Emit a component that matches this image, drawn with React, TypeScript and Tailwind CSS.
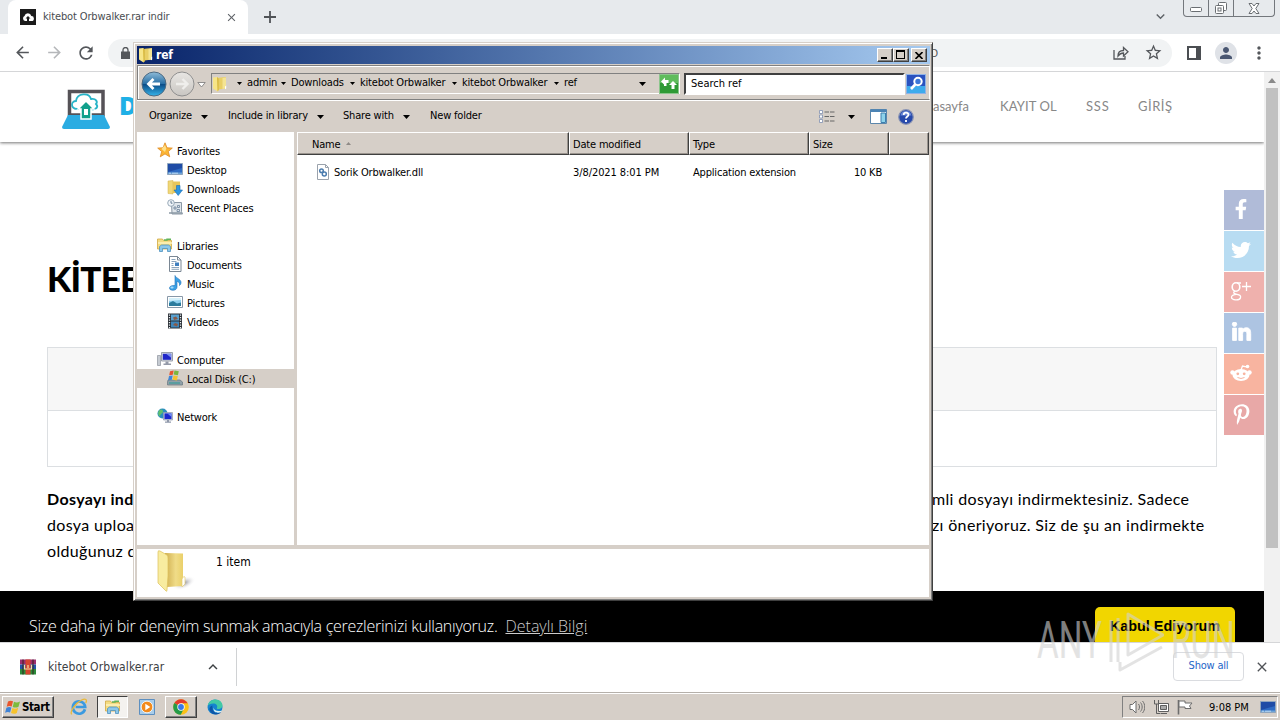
import type { ReactNode } from "react";
import {
  FaFacebookF,
  FaLinkedinIn,
  FaPinterestP,
  FaTwitter,
} from "react-icons/fa";
import {
  MdArrowBack,
  MdArrowForward,
  MdClose,
  MdExpandLess,
  MdExpandMore,
  MdMoreVert,
  MdOutlineStarBorder,
  MdPerson,
  MdRefresh,
} from "react-icons/md";

const Icon = ({ size = 16, children }: { size?: number; children: ReactNode }) => (
  <svg width={size} height={size} viewBox="0 0 16 16" fill="none" className="shrink-0">
    {children}
  </svg>
);

const FolderIcon = () => (
  <Icon>
    <path d="M6.500 1.800 14 1v11.500l-7.500 1z" fill="#e9cf66" />
    <path d="M10.500 2 14 1.500v11l-3.500.5z" fill="#f4e493" />
    <path d="M1 1.500 5 1l1.800 1.500V14L5.500 15.500 1 12.500z" fill="#f7e588" />
    <path d="M5 1l1.800 1.500V14L5.500 15.500z" fill="#d9b93f" />
    <path d="M13 10.500l1.200-1v3l-1.200.8z" fill="#fff" />
  </Icon>
);

const LargeFolderIcon = () => (
  <svg width="40" height="43" viewBox="0 0 40 43" fill="none" className="mt-px shrink-0">
    <defs>
      <linearGradient id="folderBody" x1="0" y1="0" x2="1" y2="0">
        <stop offset="0" stopColor="#cfae4e" />
        <stop offset=".6" stopColor="#f0dc88" />
        <stop offset="1" stopColor="#ead06a" />
      </linearGradient>
      <radialGradient id="folderShade">
        <stop offset="0" stopColor="#8a8a94" />
        <stop offset="1" stopColor="#fff" stopOpacity="0" />
      </radialGradient>
    </defs>
    <ellipse cx="27" cy="33" rx="12" ry="6" fill="url(#folderShade)" transform="rotate(-22 27 33)" />
    <path d="M8 3l18 .5V36l-16 1z" fill="url(#folderBody)" />
    <path d="M1 2q0-2 2-1l7 4q1 1 1 3v18l-1 14q0 2-1 1l-8-8z" fill="#f8eca0" stroke="#dcc05a" strokeWidth=".7" />
    <path d="M25 29q2-4 3-2v7l-3 3z" fill="#fff" stroke="#e4cd72" strokeWidth=".7" />
  </svg>
);

const StarIcon = () => (
  <Icon>
    <path
      d="M8 .8l2 5 5.300.3-4 3.400 1.400 5.300L8 11.900l-4.700 2.900 1.400-5.300-4-3.400L6 5.800z"
      fill="#fbb534"
      stroke="#e08a24"
      strokeWidth=".8"
    />
    <path d="M8 3l1.300 3.500L8 10 4.500 7z" fill="#ffe08a" />
  </Icon>
);

const DesktopIcon = () => (
  <Icon>
    <path d="M.5 2.500h15v11H.5z" fill="#2f6cc4" stroke="#8fa5bd" />
    <path d="M1 3h14v4L1 11z" fill="#1f4ca6" />
    <path d="M1 11.500h14V13H1z" fill="#6ea4d8" />
    <path d="M2 12.200h2M5 12.200h6" stroke="#dff0ff" strokeWidth=".7" />
  </Icon>
);

const DownloadsIcon = () => (
  <Icon>
    <path d="M1 1l5-.5V14l-5-.500z" fill="#f0d777" stroke="#d2ae4a" strokeWidth=".5" />
    <path d="M6 1.500h7V13H6z" fill="#e8c65a" />
    <path d="M9.500 5.500h3.500V10h2.500L11.200 15.500 7 10h2.500z" fill="#2f96e0" stroke="#1a6bb4" strokeWidth=".6" />
  </Icon>
);

const RecentIcon = () => (
  <Icon>
    <path d="M4.500 3.500h10v9l1 2.500H5z" fill="#dfe5ea" stroke="#8b98a5" />
    <circle cx="4" cy="4" r="3.300" fill="#f2f6fa" stroke="#8fa0b0" strokeWidth=".9" />
    <path d="M4 2v2.200h1.500" stroke="#47627c" strokeWidth=".8" />
    <path d="M7 8h2v2H7zM10.500 6.500h2v2h-2zM10 10.500h2.500v2H10z" stroke="#6b8299" strokeWidth=".8" />
    <path d="M2 14h13" stroke="#8b98a5" strokeWidth="1.500" />
  </Icon>
);

const LibrariesIcon = () => (
  <Icon>
    <path d="M.5 2h5l1 1.500h8V12H.5z" fill="#f4dc83" stroke="#d0a844" strokeWidth=".8" />
    <path d="M7 3h3v-.800h4" stroke="#62b45a" strokeWidth="1.400" />
    <path d="M1 6h14" stroke="#fff3bd" strokeWidth="1.500" />
    <path d="M2.500 14.500v-5l2-1.500h7l2 1.500v5h-3v-3h-5v3z" fill="#8cc7ea" stroke="#4f93bf" strokeWidth=".8" />
  </Icon>
);

const DocumentsIcon = () => (
  <Icon>
    <path d="M2.500.5h8l3.500 3.500v11.500H2.500z" fill="#fff" stroke="#7a8794" />
    <path d="M10.500.5V4H14" stroke="#7a8794" />
    <path d="M4.500 3.500h4M4.500 5.500h5M4.500 11.500h7.500M4.500 13.300h7.500M4.500 7.500h2M4.500 9.500h2" stroke="#6f8eac" strokeWidth=".8" />
    <path d="M8 6.500h4v3.500H8z" fill="#3f7fbf" />
  </Icon>
);

const MusicIcon = () => (
  <Icon>
    <path d="M8 .5c.6 2.500 6 3.500 6 7 0 1.500-.8 2.500-1.500 3 .6-2.500-1-3.800-2.500-4.300V12c0 2-1.700 3.300-4 3.300-2.500 0-3.500-1-3.500-2.300 0-1.700 2.500-3 5.500-2.500z" fill="#3ba1e6" stroke="#1f70b8" strokeWidth=".6" />
    <ellipse cx="5" cy="12.500" rx="1.600" ry="1" fill="#a8dcfb" />
  </Icon>
);

const PicturesIcon = () => (
  <Icon>
    <path d="M.5 2.500h15v11H.5z" fill="#fff" stroke="#8898a8" />
    <path d="M2 4h12v8H2z" fill="#8fd0ee" />
    <path d="M2 9l4-2 4 2.500 4-1V12H2z" fill="#2d7c9d" />
    <path d="M2 4h12v2L2 7z" fill="#d5f0fa" />
  </Icon>
);

const VideosIcon = () => (
  <Icon>
    <path d="M1 .5h14v15H1z" fill="#2b3036" />
    <path d="M4 1.500h8v6H4z" fill="#5aa2d0" />
    <path d="M4 8.500h8v6H4z" fill="#3f87bb" />
    <path d="M6 4.500l3-1 2 2.500-4 1zM6 12l2-2 3 1-1 2.500z" fill="#8a5a46" />
    <path d="M2.500 1.500v14M13.500 1.500v14" stroke="#e8eef2" strokeWidth="1.300" strokeDasharray="1.300 1.200" />
  </Icon>
);

const ComputerIcon = () => (
  <Icon>
    <path d="M.5 4.500h3v10h-3z" fill="#c6cbd2" stroke="#8d949e" strokeWidth=".7" />
    <path d="M4.500 1.500h11v8.500h-11z" fill="#d3d8e0" stroke="#9aa0ac" />
    <path d="M5.800 2.800h8.400v6H5.800z" fill="#2027c9" />
    <path d="M9 2.800h5.200v4z" fill="#7c90f0" />
    <path d="M8.500 10.500h3v2h2.500V14H6.500v-1.500h2z" fill="#9399a8" />
  </Icon>
);

const DiskIcon = () => (
  <Icon>
    <path d="M1 10h12l2.500 2v3H.5v-3z" fill="#8fa0a8" stroke="#66777f" strokeWidth=".7" />
    <path d="M2 13h11" stroke="#3a9b9a" strokeWidth="1.200" />
    <path d="M3 1.200l3.700-.8-.9 4.300-3.600.6z" fill="#e8552d" />
    <path d="M7.500.5l4.300.7-.9 4.100-4.300-.7z" fill="#7cb63c" />
    <path d="M2 6l3.700-.5-.9 4.300-3.700.5z" fill="#3f86d8" />
    <path d="M6.500 5.500l4.300.6-.9 4.300-4.300-.7z" fill="#f6c22e" />
  </Icon>
);

const NetworkIcon = () => (
  <Icon>
    <circle cx="5.500" cy="5.500" r="5" fill="#2b8fbe" />
    <path d="M2 2.500c2-2 4-1 4 1s-3 2-3 5C1 7.500.5 4.500 2 2.500z" fill="#5fc06e" />
    <path d="M6.500 4.500h9v7.500h-9z" fill="#c8d0de" stroke="#8f98aa" strokeWidth=".7" />
    <path d="M7.500 5.400h7v5.700h-7z" fill="#1b27cf" />
    <path d="M10.500 5.400h4V9z" fill="#6f8df2" />
    <path d="M10 12h2v1.500h2v1.300H8v-1.300h2z" fill="#8f98aa" />
  </Icon>
);

const DllIcon = () => (
  <Icon>
    <path d="M1.500.5h8l3 3v12h-11z" fill="#fff" stroke="#9aa2ac" />
    <path d="M9.500.5v3h3" stroke="#9aa2ac" />
    <circle cx="5.500" cy="6.800" r="1.800" stroke="#4b7cae" strokeWidth="1.500" />
    <circle cx="8.300" cy="10" r="2" stroke="#4b7cae" strokeWidth="1.500" />
  </Icon>
);

const SiteLogo = () => (
  <svg width="48" height="42" viewBox="0 0 48 42" fill="none" className="mt-1">
    <path d="M7.500 3.500h33.500v23.500H7.500z" fill="#fff" stroke="#555257" strokeWidth="3.500" />
    <path d="M6 27h36l6 12q0 2-2 2H2q-2 0-2-2z" fill="#2bace2" />
    <path d="M17 21h-2c-7-1-6-8-1-8 1-8 13-9 15-2 5-1 7 3 5 5 3 3 0 6-5 5" fill="#fff" stroke="#28b4c8" strokeWidth="1.800" />
    <path d="M24 13l8 8h-3v10H19V21h-3z" fill="#11a08c" stroke="#fff" strokeWidth="1.500" />
    <path d="M22 21h4v6h-4z" fill="#fff" />
  </svg>
);

const WindowsFlag = () => (
  <Icon>
    <path d="M3 2.500c2-1.200 3.500-1 5-.2L6.700 7.500c-1.700-.8-3-.8-5 .2z" fill="#e9562d" />
    <path d="M9 2.700c2 1 3.500 1 6-.2l-1.500 5.200c-2 1.200-4 1-5.800.2z" fill="#7dbb3d" />
    <path d="M1.400 8.800c2-1 3.500-.9 5-.2l-1.300 5c-1.600-.8-3.100-.8-5 .2z" fill="#3f83d6" />
    <path d="M7.400 9c2 1 3.700.9 5.800-.2l-1.400 5.100c-2 1.200-4 1-5.800.1z" fill="#f7c32c" />
  </Icon>
);

const ChromeIcon = () => (
  <Icon>
    <circle cx="8" cy="8" r="7.800" fill="#fbc116" />
    <path d="M8 8L1.300 4A7.800 7.800 0 0 1 14.700 4.300H8z" fill="#e33b2e" />
    <path d="M8 8L1.300 4A7.800 7.800 0 0 0 7.700 15.800l3-5.800z" fill="#259b48" />
    <circle cx="8" cy="8" r="3.700" fill="#fff" />
    <circle cx="8" cy="8" r="2.900" fill="#3a78e8" />
  </Icon>
);

const EdgeIcon = () => (
  <Icon>
    <circle cx="8" cy="8" r="7.500" fill="#1583cf" />
    <path d="M.6 7C1.500 2.500 5 .5 8.500.5c4 0 7 2.900 7 6 0 2.300-1.800 3.500-4 3.500-1.500 0-2-.6-1.500-1.300C11 6.500 9 4.500 6.300 4.500 3.500 4.500 1.500 5.700.6 7z" fill="#42c9a5" />
    <path d="M5.500 9c0 3 2.500 5 5.500 5 1.300 0 2.500-.5 3.300-1.200C12.500 16 7 16.500 4 13.500 1.500 11 2 7.500 5.500 6.500c-.4.800 0 1.500 0 2.500z" fill="#0d55a8" />
    <path d="M6.500 8.500c.3 2.500 3 4.300 8.200 3.200l-.5 1.200c-3.500 1.800-8.300.6-7.700-4.400z" fill="#d9eef2" />
  </Icon>
);

const IeIcon = () => (
  <Icon size={18}>
    <path d="M13.300 10A5.500 5.500 0 1 1 13.500 8H5" stroke="#3b9ae0" strokeWidth="2.400" />
    <path d="M1.500 14.500C-.5 12 5 4.500 10 2c4-2 5.500-.5 4 2.500" stroke="#e9b93a" strokeWidth="1.200" />
  </Icon>
);

const MediaPlayerIcon = () => (
  <Icon>
    <path d="M.5.5h15v15H.5z" fill="#a9cdea" stroke="#5d8fc0" />
    <circle cx="8" cy="8" r="5.800" fill="#f28a1c" stroke="#fff" strokeWidth=".8" />
    <path d="M6.300 4.800L11.300 8l-5 3.200z" fill="#fff" />
  </Icon>
);

const RarIcon = () => (
  <Icon>
    <path d="M0 .5h16v5H0z" fill="#9b2d6e" />
    <path d="M0 5.500h16V10H0z" fill="#2454a6" />
    <path d="M0 10h16v5.500H0z" fill="#2c8a3a" />
    <path d="M5.500.5h5v15h-5z" fill="#d7442f" />
    <path d="M3 .5v15M13 .5v15" stroke="#32241a" />
    <path d="M4.500 6v4h7V6M8 6v3" stroke="#f3dfa4" strokeWidth="1.200" />
  </Icon>
);

const Caret = () => (
  <svg width="7" height="4" viewBox="0 0 7 4" className="shrink-0">
    <path d="M0 0h7L3.500 4z" fill="#000" />
  </svg>
);

const SmallCaret = () => (
  <svg width="5" height="3" viewBox="0 0 5 3" className="shrink-0">
    <path d="M0 0h5L2.500 3z" fill="#000" />
  </svg>
);

const TabStrip = () => (
  <div className="flex h-[34px] bg-[#e7eaed] pl-2">
    <div className="flex w-60 items-center rounded-t-lg bg-white pl-3 pr-2.5">
      <div className="flex size-4 items-center justify-center bg-[#1b1b1b]">
        <svg width="12" height="10" viewBox="0 0 12 10">
          <path d="M3 9a2.700 2.700 0 0 1-.5-5A3.500 3.500 0 0 1 9.300 4a2.500 2.500 0 0 1 .2 5H7V6.500h1.500L6 4 3.500 6.500H5V9z" fill="#fff" />
        </svg>
      </div>
      <span className="ml-[7px] flex-1 pt-px text-[11px] tracking-[-0.13px] text-[#4a4d51]">
        kitebot Orbwalker.rar indir
      </span>
      <MdClose size={13} className="text-[#5f6368]" />
    </div>
    <svg width="12" height="12" viewBox="0 0 12 12" className="ml-4 mt-[11px]">
      <path d="M6 0v12M0 6h12" stroke="#505357" strokeWidth="1.800" />
    </svg>
    <div className="flex-1" />
    <MdExpandMore size={17} className="mr-[14px] mt-2 text-[#5f6368]" />
    <div className="mr-[5px] flex h-[17px] w-[92px] rounded-b border border-t-0 border-[#73777c]">
      <div className="flex w-[25px] items-center justify-center border-r border-[#73777c]">
        <svg width="13" height="6" viewBox="0 0 13 6" className="mt-1">
          <rect x=".5" y=".5" width="11" height="4" rx="1" fill="#fff" stroke="#6a6e72" />
        </svg>
      </div>
      <div className="flex w-[25px] items-center justify-center border-r border-[#73777c]">
        <svg width="14" height="14" viewBox="0 0 14 14" fill="#fff" stroke="#6a6e72">
          <rect x="4.500" y="1.500" width="8" height="8" rx="1" />
          <rect x="1.500" y="4.500" width="8" height="8" rx="1" />
          <rect x="4" y="7" width="3" height="3" />
        </svg>
      </div>
      <div className="flex flex-1 items-center justify-center">
        <svg width="12" height="11" viewBox="0 0 12 11">
          <path d="M1 .5h3l2 2.500L8 .5h3L7.800 5.500 11 10.500H8L6 8l-2 2.500H1l3.200-5z" fill="#fff" stroke="#6a6e72" />
        </svg>
      </div>
    </div>
  </div>
);

const AddressRow = () => (
  <div className="flex h-[38px] items-center border-b border-[#d5d6d8] bg-white pl-[13px] text-[#54575b]">
    <MdArrowBack size={19} />
    <MdArrowForward size={19} className="ml-[13px] text-[#b5b7ba]" />
    <MdRefresh size={20} className="ml-[12px]" />
    <div className="ml-[12px] flex h-7 w-[1064px] items-center justify-between rounded-full bg-[#f1f3f4] pl-[13px] pr-[9px]">
      <svg width="9" height="12" viewBox="0 0 9 12" fill="none">
        <path d="M0 4.500h9V12H0z" fill="#54575b" />
        <path d="M2 5V3a2.500 2.500 0 0 1 5 0v2" stroke="#54575b" strokeWidth="1.300" />
      </svg>
      <div className="flex items-center">
        <span className="mr-[175px] mt-1 text-[11px]">D</span>
        <svg width="16" height="16" viewBox="0 0 16 16" fill="none" stroke="#54575b" strokeWidth="1.300">
          <path d="M1 5v9h11v-3M5 11c0-4 2-5.500 5.500-5.500V2.500L15 6.800 10.500 11V8C8 8 6.500 9 5 11z" />
        </svg>
        <MdOutlineStarBorder size={19} className="ml-[15px]" />
      </div>
    </div>
    <svg width="14" height="14" viewBox="0 0 14 14" className="ml-[15px]">
      <path d="M1 1h12v12H1z" fill="#fff" stroke="#4b4e52" strokeWidth="2" />
      <path d="M9 1h4v12H9z" fill="#4b4e52" />
    </svg>
    <div className="ml-[14px] flex size-[22px] items-center justify-center rounded-full bg-[#dfe2e7]">
      <MdPerson size={18} className="text-[#4a5772]" />
    </div>
    <MdMoreVert size={20} className="ml-3" />
  </div>
);

const shareButtons = [
  { name: "facebook", bg: "bg-[#b0bbd8]", icon: <FaFacebookF size={20} /> },
  { name: "twitter", bg: "bg-[#b8dcf2]", icon: <FaTwitter size={20} /> },
  {
    name: "google",
    bg: "bg-[#efb1ad]",
    icon: (
      <svg width="22" height="20" viewBox="0 0 22 20" fill="none" stroke="#fff" strokeWidth="1.600">
        <ellipse cx="6" cy="6" rx="3.800" ry="4.200" />
        <path d="M11 2H7M5 10c-3 2 0 3 2 3.300 3 .5 4 1.700 3.500 3.400C9.500 20 1 19.500 1.500 16c.3-2 2.500-2.500 5-2.700M16.500 1v9M12 5.500h9" strokeWidth="1.300" />
      </svg>
    ),
  },
  {
    name: "linkedin",
    bg: "bg-[#adc4e2]",
    icon: <FaLinkedinIn size={21} stroke="#fff" strokeWidth={22} />,
  },
  {
    name: "reddit",
    bg: "bg-[#f8b4a0]",
    icon: (
      <svg width="22" height="18" viewBox="0 0 22 18" fill="#fff">
        <ellipse cx="11" cy="11" rx="8.500" ry="6" />
        <circle cx="2.500" cy="8.500" r="2.200" />
        <circle cx="19.500" cy="8.500" r="2.200" />
        <circle cx="17.500" cy="2.500" r="1.800" />
        <path d="M11 6l1.500-4 4 .8" fill="none" stroke="#fff" strokeWidth="1.300" />
        <g fill="#f8b4a0">
          <circle cx="7.800" cy="9.800" r="1.400" />
          <circle cx="14.200" cy="9.800" r="1.400" />
        </g>
        <path d="M7.500 13.500q3.500 2 7 0" fill="none" stroke="#f8b4a0" />
      </svg>
    ),
  },
  { name: "pinterest", bg: "bg-[#e8a8a7]", icon: <FaPinterestP size={21} /> },
];

const ShareBar = () => (
  <div className="absolute right-0 top-[118px] flex flex-col gap-px">
    {shareButtons.map((button) => (
      <div
        key={button.name}
        className={`flex size-10 items-center justify-center pb-0.5 pr-1.5 text-white ${button.bg}`}
      >
        {button.icon}
      </div>
    ))}
  </div>
);

const Page = () => (
  <div className="flex h-[570px]">
    <div className="relative flex w-[1264px] flex-col overflow-hidden bg-white">
      <header className="flex h-[70px] shrink-0 items-center pl-[62px] shadow-[0_1px_3px_rgba(0,0,0,0.55)]">
        <SiteLogo />
        <span className="ml-[9px] w-[783px] pb-0.5 font-['Open_Sans'] text-[25px] font-extrabold text-[#1fb0e6]">
          D
        </span>
        <nav className="flex whitespace-nowrap font-['Lato'] text-[13px] text-[#888]">
          <span className="w-[67px] text-right">Anasayfa</span>
          <span className="ml-[31px] w-[86px] tracking-[0.1px]">KAYIT OL</span>
          <span className="w-[52px] tracking-[0.8px]">SSS</span>
          <span className="tracking-[0.5px]">GİRİŞ</span>
        </nav>
      </header>
      <main className="flex-1 pl-[47px] text-base text-black">
        <h1 className="mt-[112px] font-['Lato'] text-[35px] font-black leading-[48px] tracking-[-0.8px]">
          KİTEB
        </h1>
        <div className="mt-[45px] h-[120px] w-[1170px] border border-[#dcdfe2]">
          <div className="h-[63px] border-b border-[#dcdfe2] bg-[#f7f7f7]" />
        </div>
        <div className="mt-[19px] font-['Lato'] leading-[26px] tracking-[0.34px]">
          <div className="flex">
            <b className="w-[885px]">Dosyayı ind</b>
            <span>mli dosyayı indirmektesiniz. Sadece</span>
          </div>
          <div className="flex">
            <span className="w-[885px]">dosya uploa</span>
            <span>zı öneriyoruz. Siz de şu an indirmekte</span>
          </div>
          <div>olduğunuz d</div>
        </div>
      </main>
      <footer className="flex h-[51px] shrink-0 justify-between overflow-hidden bg-black px-[29px] text-white">
        <p className="mt-[23px] whitespace-nowrap font-['Open_Sans'] text-base font-light leading-6">
          <span className="tracking-[-0.26px]">
            Size daha iyi bir deneyim sunmak amacıyla çerezlerinizi kullanıyoruz.
          </span>
          <span className="ml-2 text-[#ccc] underline">Detaylı Bilgi</span>
        </p>
        <div className="mt-4 h-[45px] w-[140px] rounded-[5px] bg-[#f1d600] pt-[9px] text-center font-['Liberation_Sans'] text-[14.4px] font-bold text-black">
          Kabul Ediyorum
        </div>
      </footer>
      <ShareBar />
    </div>
    <div className="flex w-4 flex-col items-center bg-[#f1f1f1]">
      <svg width="8" height="16" viewBox="0 0 8 16">
        <path d="M0 11h8L4 6z" fill="#8a8a8a" />
      </svg>
      <div className="h-[460px] w-3 bg-[#c1c1c1]" />
    </div>
  </div>
);

const DownloadShelf = () => (
  <div className="flex h-[50px] items-center border-t border-[#d5d6d8] bg-white pb-0.5 pl-5 text-[#3c4043]">
    <RarIcon />
    <span className="ml-3 w-[156px] text-xs tracking-[0.1px]">kitebot Orbwalker.rar</span>
    <MdExpandLess size={18} />
    <div className="ml-[14px] h-[38px] w-px bg-[#d0d2d4]" />
    <div className="flex-1" />
    <div className="flex h-[29px] w-[71px] items-center justify-center rounded border border-[#dadce0] text-[11px] tracking-[-0.2px] text-[#2566c8]">
      Show all
    </div>
    <MdClose size={16} className="ml-2.5 mr-2.5 text-[#505357]" />
  </div>
);

const Taskbar = () => (
  <div className="flex h-7 items-center border-t border-[#b5b0aa] bg-[#d6cfc8] pl-0.5 pr-0.5 shadow-[inset_0_1px_0_#fff]">
    <div className="mt-px flex h-[22px] w-[52px] items-center gap-px border border-b-[#404040] border-l-white border-r-[#404040] border-t-white pl-0.5 text-[11.5px] font-bold text-black shadow-[inset_-1px_-1px_0_#808080]">
      <WindowsFlag />
      <span className="pt-0.5 tracking-[-0.4px]">Start</span>
    </div>
    <div className="ml-[16px]">
      <IeIcon />
    </div>
    <div className="ml-[9px] mt-px flex h-[22px] w-[31px] items-center justify-center border border-b-white border-l-[#404040] border-r-white border-t-[#404040] bg-[#f4f2ef]">
      <LibrariesIcon />
    </div>
    <div className="ml-[11px]">
      <MediaPlayerIcon />
    </div>
    <div className="ml-[10px] mt-px flex h-[22px] w-[32px] items-center justify-center border border-b-[#404040] border-l-white border-r-[#404040] border-t-white shadow-[inset_-1px_-1px_0_#808080]">
      <ChromeIcon />
    </div>
    <div className="ml-[10px]">
      <EdgeIcon />
    </div>
    <div className="flex-1" />
    <div className="mt-px flex h-[22px] w-[156px] items-center border border-b-white border-l-[#808080] border-r-white border-t-[#808080] pl-1.5">
      <svg width="16" height="16" viewBox="0 0 16 16" fill="#fff" stroke="#6d6d6d">
        <path d="M1 5.500h2.500L7 2v12l-3.500-3.500H1z" />
        <path d="M9.500 5c1.300 1.500 1.300 4.500 0 6M11.500 3.500c2.200 2.500 2.200 6.500 0 9M13.500 2c3 3.500 3 8.500 0 12" fill="none" />
      </svg>
      <svg width="16" height="16" viewBox="0 0 16 16" fill="#fff" stroke="#5f5f5f" className="ml-2">
        <path d="M5.500 4.500h10v8h-10zM8 14.500h6" />
        <path d="M7.500 6.500h6v4h-6z" fill="#aaa" />
        <path d="M1.500 1v4h4V1M3.500 5v9.500h4" fill="none" />
      </svg>
      <svg width="16" height="16" viewBox="0 0 16 16" fill="#fff" stroke="#6d6d6d" className="ml-2">
        <path d="M1.500 1v14.500" strokeWidth="1.600" />
        <path d="M2 2h6v2h7l-2.500 3L14 9.500H8V8H2z" />
      </svg>
      <span className="ml-4 w-[51px] whitespace-nowrap pt-0.5 text-[11px] text-black">9:08 PM</span>
      <DesktopIcon />
    </div>
  </div>
);

const captionButton =
  "flex h-[14px] w-4 items-center justify-center border border-b-[#404040] border-l-white border-r-[#404040] border-t-white bg-[#d6cfc8] shadow-[inset_-1px_-1px_0_#808080]";

const TitleBar = () => (
  <div className="flex h-[18px] shrink-0 items-center bg-linear-to-r from-[#0a246a] to-[#a6caf0] pl-px pr-[3px]">
    <FolderIcon />
    <span className="ml-0.5 flex-1 text-xs font-bold text-white">ref</span>
    <div className={captionButton}>
      <div className="mr-0.5 mt-[6px] h-0.5 w-1.5 bg-black" />
    </div>
    <div className={captionButton}>
      <div className="mb-px mr-px h-[9px] w-[9px] border border-t-2 border-black" />
    </div>
    <div className={`ml-0.5 ${captionButton}`}>
      <svg width="8" height="7" viewBox="0 0 8 7">
        <path d="M.5 0l7 7M7.500 0l-7 7" stroke="#000" strokeWidth="1.600" />
      </svg>
    </div>
  </div>
);

const crumbs = [
  { label: "admin", width: "w-[44px]" },
  { label: "Downloads", width: "w-[69px]" },
  { label: "kitebot Orbwalker", width: "w-[102px]" },
  { label: "kitebot Orbwalker", width: "w-[102px]" },
  { label: "ref", width: "w-[78px]" },
];

const NavigationBar = () => (
  <div className="mt-px flex h-[35px] shrink-0 items-center border border-b-[#808080] border-l-[#808080] border-r-white border-t-[#808080] pl-[3px] pt-0.5 shadow-[inset_1px_1px_0_#fff,0_1px_0_#fff]">
    <svg width="54" height="26" viewBox="0 0 54 26" fill="none" className="shrink-0">
      <defs>
        <linearGradient id="back" x1="0" y1="0" x2="0" y2="1">
          <stop offset="0" stopColor="#8fbcd8" />
          <stop offset=".48" stopColor="#2a70a6" />
          <stop offset=".52" stopColor="#0b4d88" />
          <stop offset="1" stopColor="#35b4ea" />
        </linearGradient>
        <linearGradient id="forward" x1="0" y1="0" x2="0" y2="1">
          <stop offset="0" stopColor="#e8e6e3" />
          <stop offset="1" stopColor="#c9c6c2" />
        </linearGradient>
      </defs>
      <circle cx="13" cy="13" r="12" fill="url(#back)" stroke="#4d6a82" />
      <path d="M19 13H8M12.500 8L7.500 13l5 5" stroke="#fff" strokeWidth="2.800" />
      <circle cx="41" cy="13" r="12" fill="url(#forward)" stroke="#8f8f8f" />
      <path d="M35 13h11M41.500 8l5 5-5 5" stroke="#efeeec" strokeWidth="2.400" />
    </svg>
    <svg width="9" height="6" viewBox="0 0 9 6" className="ml-0.5 mt-0.5 shrink-0">
      <path d="M.8.5h7.400L4.500 5z" fill="#fff" stroke="#777" strokeWidth=".8" />
    </svg>
    <div className="ml-[5px] flex h-[21px] w-[469px] items-center border border-b-white border-l-[#808080] border-r-white border-t-[#808080]">
      <FolderIcon />
      <div className="ml-[9px] flex flex-1 items-center">
        {crumbs.map((crumb, index) => (
          <div key={index} className={`flex shrink-0 items-center gap-[5px] whitespace-nowrap ${crumb.width}`}>
            <SmallCaret />
            <span>{crumb.label}</span>
          </div>
        ))}
      </div>
      <div className="pr-[13px]">
        <Caret />
      </div>
      <svg width="20" height="20" viewBox="0 0 20 20" className="shrink-0">
        <rect x=".5" y=".5" width="19" height="19" fill="#2f9a35" stroke="#8cc58c" />
        <path d="M1 1h18v8H1z" fill="#5fbc5c" />
        <path d="M2 7.500L6 3.500v2.500h3.500v3H6v2.500zM14 7l4 4h-2.500v4h-3v-4H10z" fill="#fff" />
        <path d="M5 9h2.500v3H5z" fill="#fff" />
      </svg>
    </div>
    <div className="ml-1 flex h-[22px] w-[221px] items-center border-2 border-b-white border-l-[#404040] border-r-white border-t-[#404040] bg-white pl-[5px] pt-px tracking-normal">
      Search ref
    </div>
    <svg width="20" height="20" viewBox="0 0 20 20" className="ml-px shrink-0">
      <rect x=".5" y=".5" width="19" height="19" fill="#2a52bf" stroke="#8fb2e6" />
      <path d="M1 12h18v7H1z" fill="#3dabec" />
      <circle cx="12" cy="7.500" r="3.700" fill="#3b77d8" stroke="#fff" strokeWidth="2" />
      <path d="M9.200 10.500L5 15" stroke="#fff" strokeWidth="2.600" />
    </svg>
  </div>
);

const CommandBar = () => (
  <div className="mt-px flex h-[31px] shrink-0 items-center pl-3 pr-4">
    <div className="flex w-[79px] items-center gap-[9px]">
      Organize <Caret />
    </div>
    <div className="flex w-[115px] items-center gap-[9px] whitespace-nowrap">
      Include in library <Caret />
    </div>
    <div className="flex w-[87px] items-center gap-[9px] whitespace-nowrap">
      Share with <Caret />
    </div>
    <div className="flex-1">New folder</div>
    <svg width="16" height="13" viewBox="0 0 16 13" fill="none">
      <path d="M.5.5h3v3h-3zM.5 5h3v3h-3zM.5 9.500h3v3h-3z" fill="#fff" stroke="#7f8fb0" strokeWidth=".8" />
      <path d="M5.500 2h10M5.500 6.500h10M5.500 11h10" stroke="#666" strokeDasharray="4.500 1" />
    </svg>
    <div className="ml-[13px]">
      <Caret />
    </div>
    <svg width="17" height="15" viewBox="0 0 17 15" className="ml-[15px]">
      <path d="M.5.5h16v14H.5z" fill="#fff" stroke="#5b86ab" />
      <path d="M.5.5h16v2.500H.5z" fill="#4b83b4" />
      <path d="M11 4h4.500v9.500H11z" fill="#8ed2ea" stroke="#3c7fae" />
    </svg>
    <svg width="16" height="16" viewBox="0 0 16 16" fill="none" className="ml-[11px]">
      <circle cx="8" cy="8" r="7.300" fill="#2749ab" stroke="#8a94b4" strokeWidth="1.200" />
      <path d="M2.500 6.500a5.600 5.600 0 0 1 11 0z" fill="#6a88d6" />
      <path d="M5.700 6c0-3 4.800-3 4.800-.3C10.500 7.500 8 7.500 8 9.500M8 11v2" stroke="#fff" strokeWidth="1.800" />
    </svg>
  </div>
);

const sidebarGroups = [
  {
    label: "Favorites",
    icon: <StarIcon />,
    items: [
      { label: "Desktop", icon: <DesktopIcon /> },
      { label: "Downloads", icon: <DownloadsIcon /> },
      { label: "Recent Places", icon: <RecentIcon /> },
    ],
  },
  {
    label: "Libraries",
    icon: <LibrariesIcon />,
    items: [
      { label: "Documents", icon: <DocumentsIcon /> },
      { label: "Music", icon: <MusicIcon /> },
      { label: "Pictures", icon: <PicturesIcon /> },
      { label: "Videos", icon: <VideosIcon /> },
    ],
  },
  {
    label: "Computer",
    icon: <ComputerIcon />,
    items: [{ label: "Local Disk (C:)", icon: <DiskIcon />, selected: true }],
  },
  { label: "Network", icon: <NetworkIcon />, items: [] },
];

const SidebarLabel = ({ icon, label }: { icon: ReactNode; label: string }) => (
  <>
    <span className="pb-0.5">{icon}</span>
    <span className="pt-[3px]">{label}</span>
  </>
);

const Sidebar = () => (
  <div className="flex w-[157px] flex-col gap-[19px] bg-white pt-[9px]">
    {sidebarGroups.map((group) => (
      <div key={group.label}>
        <div className="flex h-[19px] items-center gap-1 pl-5">
          <SidebarLabel icon={group.icon} label={group.label} />
        </div>
        {group.items.map((item) => (
          <div
            key={item.label}
            className={`flex h-[19px] items-center gap-1 pl-[30px] ${
              "selected" in item ? "bg-[#d6cfc8]" : ""
            }`}
          >
            <SidebarLabel icon={item.icon} label={item.label} />
          </div>
        ))}
      </div>
    ))}
  </div>
);

const headerCell =
  "flex items-center border-b border-l border-r border-t border-b-[#404040] border-l-white border-r-[#404040] border-t-white bg-[#d6cfc8] pl-[3px] pt-[3px] shadow-[inset_-1px_-1px_0_#9a948e]";

const FileList = () => (
  <div className="ml-[3px] flex-1 bg-white">
    <div className="flex h-[23px]">
      <div className={`w-[272px] gap-1.5 ${headerCell}`}>
        <span className="ml-[11px]">Name</span>
        <svg width="5" height="3" viewBox="0 0 5 3" className="-mt-1">
          <path d="M0 3h5L2.500 0z" fill="#8f8a86" />
        </svg>
      </div>
      <div className={`w-[120px] ${headerCell}`}>Date modified</div>
      <div className={`w-[120px] ${headerCell}`}>Type</div>
      <div className={`w-[80px] ${headerCell}`}>Size</div>
      <div className={`flex-1 ${headerCell}`} />
    </div>
    <div className="mt-2 flex h-[19px] items-center whitespace-nowrap">
      <div className="flex w-[276px] items-center gap-0.5 pl-[19px]">
        <span className="pb-0.5">
          <DllIcon />
        </span>
        <span className="pt-px">Sorik Orbwalker.dll</span>
      </div>
      <div className="w-[120px] pt-px tracking-[-0.08px]">3/8/2021 8:01 PM</div>
      <div className="w-[120px] pt-px">Application extension</div>
      <div className="w-[69px] pt-px text-right">10 KB</div>
    </div>
  </div>
);

const ExplorerWindow = () => (
  <div className="absolute left-[133px] top-[42px] flex h-[559px] w-[800px] flex-col border border-b-[#404040] border-l-[#d6cfc8] border-r-[#404040] border-t-[#d6cfc8] bg-[#d6cfc8] p-[3px] pr-[2px] text-[11px] tracking-[-0.18px] text-black shadow-[inset_1px_1px_0_#fff,inset_-1px_-1px_0_#808080]">
    <TitleBar />
    <NavigationBar />
    <CommandBar />
    <div className="flex h-[413px] shrink-0 pr-px">
      <Sidebar />
      <FileList />
    </div>
    <div className="mr-px mt-1 flex flex-1 bg-white pl-5">
      <LargeFolderIcon />
      <span className="ml-[19px] mt-[5px] text-xs tracking-normal">1 item</span>
    </div>
  </div>
);

const Watermark = () => (
  <div className="absolute left-[1037px] top-[606px] flex h-[70px] w-[200px] items-center justify-between opacity-60">
    <span className="w-[64px] origin-left scale-x-[0.64] font-['Roboto'] text-[52px] leading-none text-[#d2d2d2]">
      ANY
    </span>
    <svg
      width="64"
      height="70"
      viewBox="0 0 64 70"
      fill="none"
      stroke="#d2d2d2"
      strokeWidth="3"
      strokeLinejoin="round"
      className="relative -left-1 shrink-0"
    >
      <path d="M11 14v42M18 56V12M28 46V8l35 21L28 49zM20 56v8l42-23" />
    </svg>
    <span className="w-[66px] origin-left scale-x-[0.62] font-['Roboto'] text-[52px] leading-none text-[#d2d2d2]">
      RUN
    </span>
  </div>
);

const App = () => {
  return (
    <div className="relative h-[720px] w-[1280px] overflow-hidden bg-white font-['DejaVu_Sans_Condensed','DejaVu_Sans',sans-serif]">
      <TabStrip />
      <AddressRow />
      <Page />
      <DownloadShelf />
      <Taskbar />
      <ExplorerWindow />
      <Watermark />
    </div>
  );
};

export default App;
